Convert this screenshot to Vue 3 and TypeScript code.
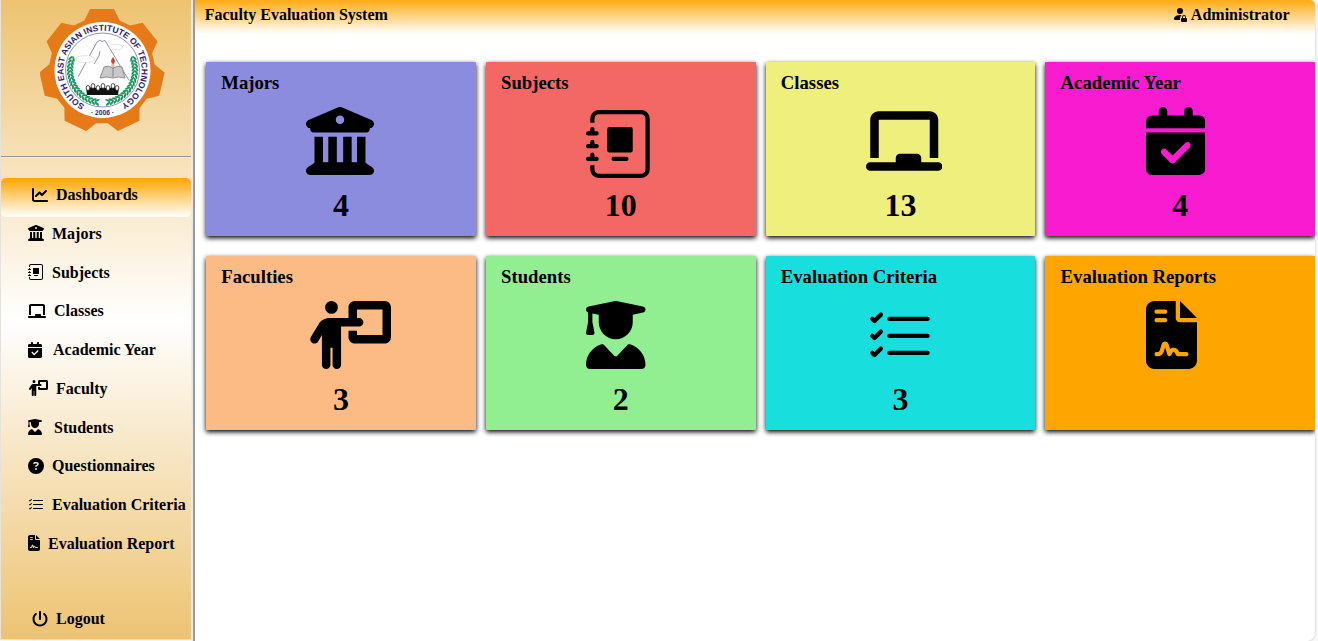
<script setup lang="ts">
interface Icon { w: number; h: number; d: string }
interface MenuItem { label: string; icon: string; gap: number; width: number; shift?: boolean; active?: boolean }
interface Card { title: string; icon: string; count: string; color: string }

const icons: Record<string, Icon> = {
  chart: { w: 512, h: 512, d: 'M64 64c0-17.7-14.3-32-32-32S0 46.3 0 64V400c0 44.2 35.8 80 80 80H480c17.7 0 32-14.3 32-32s-14.3-32-32-32H80c-8.8 0-16-7.2-16-16V64zm406.6 86.6c12.5-12.5 12.5-32.8 0-45.3s-32.8-12.5-45.3 0L320 210.7l-57.4-57.4c-12.5-12.5-32.8-12.5-45.3 0l-112 112c-12.5 12.5-12.5 32.8 0 45.3s32.8 12.5 45.3 0L240 221.3l57.4 57.4c12.5 12.5 32.8 12.5 45.3 0l128-128z' },
  columns: { w: 512, h: 512, d: 'M243.4 2.6l-224 96c-14 6-21.8 21-18.7 35.8S16.8 160 32 160v8c0 13.3 10.7 24 24 24H456c13.3 0 24-10.7 24-24v-8c15.2 0 28.3-10.7 31.3-25.6s-4.8-29.9-18.7-35.8l-224-96c-8-3.4-17.2-3.4-25.2 0zM128 224H64V420.3c-.6 .3-1.2 .7-1.8 1.1l-48 32c-11.7 7.8-17 22.4-12.9 35.9S17.9 512 32 512H480c14.1 0 26.5-9.2 30.6-22.7s-1.1-28.1-12.9-35.9l-48-32c-.6-.4-1.2-.7-1.8-1.1V224H384V416H344V224H280V416H232V224H168V416H128V224zM256 64a32 32 0 1 1 0 64 32 32 0 1 1 0-64z' },
  journal: { w: 16, h: 16, d: 'M5.5 4a.5.5 0 0 0-.5.5v5a.5.5 0 0 0 .5.5h5a.5.5 0 0 0 .5-.5v-5a.5.5 0 0 0-.5-.5h-5zm1 7a.5.5 0 0 0 0 1h3a.5.5 0 0 0 0-1h-3zM3 0h10a2 2 0 0 1 2 2v12a2 2 0 0 1-2 2H3a2 2 0 0 1-2-2v-1h1v1a1 1 0 0 0 1 1h10a1 1 0 0 0 1-1V2a1 1 0 0 0-1-1H3a1 1 0 0 0-1 1v1H1V2a2 2 0 0 1 2-2zM1 5v-.5a.5.5 0 0 1 1 0V5h.5a.5.5 0 0 1 0 1h-2a.5.5 0 0 1 0-1H1zm0 3v-.5a.5.5 0 0 1 1 0V8h.5a.5.5 0 0 1 0 1h-2a.5.5 0 0 1 0-1H1zm0 3v-.5a.5.5 0 0 1 1 0v.5h.5a.5.5 0 0 1 0 1h-2a.5.5 0 0 1 0-1H1z' },
  board: { w: 576, h: 512, d: 'M96 32C60.7 32 32 60.7 32 96V384H96V96l384 0V384h64V96c0-35.3-28.7-64-64-64H96zM224 384v32H32c-17.7 0-32 14.3-32 32s14.3 32 32 32H544c17.7 0 32-14.3 32-32s-14.3-32-32-32H416V384c0-17.7-14.3-32-32-32H256c-17.7 0-32 14.3-32 32z' },
  calendar: { w: 448, h: 512, d: 'M128 0c17.7 0 32 14.3 32 32V64H288V32c0-17.7 14.3-32 32-32s32 14.3 32 32V64h48c26.5 0 48 21.5 48 48v48H0V112C0 85.5 21.5 64 48 64H96V32c0-17.7 14.3-32 32-32zM0 192H448V464c0 26.5-21.5 48-48 48H48c-26.5 0-48-21.5-48-48V192zM329 305c9.4-9.4 9.4-24.6 0-33.9s-24.6-9.4-33.9 0l-95 95-47-47c-9.4-9.4-24.6-9.4-33.9 0s-9.4 24.6 0 33.9l64 64c9.4 9.4 24.6 9.4 33.9 0L329 305z' },
  teacher: { w: 640, h: 512, d: 'M192 96a48 48 0 1 0 0-96 48 48 0 1 0 0 96zm-8 384V352h16V480c0 17.7 14.3 32 32 32s32-14.3 32-32V192h56 64 16c17.7 0 32-14.3 32-32s-14.3-32-32-32H384V64H576V256H384V224H320v48c0 26.5 21.5 48 48 48H592c26.5 0 48-21.5 48-48V48c0-26.5-21.5-48-48-48H368c-26.5 0-48 21.5-48 48v80H243.1 177.1c-33.7 0-64.9 17.7-82.3 46.6l-58.3 97c-9.1 15.1-4.2 34.8 10.9 43.9s34.8 4.2 43.9-10.9L120 256.9V480c0 17.7 14.3 32 32 32s32-14.3 32-32z' },
  graduate: { w: 448, h: 512, d: 'M219.3 .5c3.1-.6 6.3-.6 9.4 0l200 40C439.9 42.7 448 52.6 448 64s-8.1 21.3-19.3 23.5L352 102.9V160c0 70.7-57.3 128-128 128s-128-57.3-128-128V102.9L48 93.3v65.1l15.7 78.4c.9 4.7-.3 9.6-3.3 13.3s-7.6 5.9-12.4 5.9H16c-4.8 0-9.3-2.1-12.4-5.9s-4.3-8.6-3.3-13.3L16 158.4V86.6C6.5 83.3 0 74.3 0 64C0 52.6 8.1 42.7 19.3 40.5l200-40zM111.9 327.7c10.5-3.4 21.8 .4 29.4 8.5l71 75.5c6.3 6.7 17 6.7 23.3 0l71-75.5c7.6-8.1 18.9-11.9 29.4-8.5C401 348.6 448 409.4 448 481.3c0 17-13.8 30.7-30.7 30.7H30.7C13.8 512 0 498.2 0 481.3c0-71.9 47-132.7 111.9-153.6z' },
  question: { w: 512, h: 512, d: 'M256 512A256 256 0 1 0 256 0a256 256 0 1 0 0 512zM169.8 165.3c7.9-22.3 29.1-37.3 52.8-37.3h58.3c34.9 0 63.1 28.3 63.1 63.1c0 22.6-12.1 43.5-31.7 54.8L280 264.4c-.2 13-10.9 23.6-24 23.6c-13.3 0-24-10.7-24-24V250.5c0-8.6 4.6-16.5 12.1-20.8l44.3-25.4c4.7-2.7 7.6-7.7 7.6-13.1c0-8.4-6.8-15.1-15.1-15.1H222.6c-3.4 0-6.4 2.1-7.5 5.3l-.4 1.2c-4.4 12.5-18.2 19-30.6 14.6s-19-18.2-14.6-30.6l.4-1.2zM224 352a32 32 0 1 1 64 0 32 32 0 1 1-64 0z' },
  checklist: { w: 16, h: 16, d: 'M5 11.5a.5.5 0 0 1 .5-.5h9a.5.5 0 0 1 0 1h-9a.5.5 0 0 1-.5-.5zm0-4a.5.5 0 0 1 .5-.5h9a.5.5 0 0 1 0 1h-9a.5.5 0 0 1-.5-.5zm0-4a.5.5 0 0 1 .5-.5h9a.5.5 0 0 1 0 1h-9a.5.5 0 0 1-.5-.5zM3.854 2.146a.5.5 0 0 1 0 .708l-1.5 1.5a.5.5 0 0 1-.708 0l-.5-.5a.5.5 0 1 1 .708-.708L2 3.293l1.146-1.147a.5.5 0 0 1 .708 0zm0 4a.5.5 0 0 1 0 .708l-1.5 1.5a.5.5 0 0 1-.708 0l-.5-.5a.5.5 0 1 1 .708-.708L2 7.293l1.146-1.147a.5.5 0 0 1 .708 0zm0 4a.5.5 0 0 1 0 .708l-1.5 1.5a.5.5 0 0 1-.708 0l-.5-.5a.5.5 0 0 1 .708-.708l.146.147 1.146-1.147a.5.5 0 0 1 .708 0z' },
  contract: { w: 384, h: 512, d: 'M64 0C28.7 0 0 28.7 0 64V448c0 35.3 28.7 64 64 64H320c35.3 0 64-28.7 64-64V160H256c-17.7 0-32-14.3-32-32V0H64zM256 0V128H384L256 0zM80 64h64c8.8 0 16 7.2 16 16s-7.2 16-16 16H80c-8.8 0-16-7.2-16-16s7.2-16 16-16zm0 64h64c8.8 0 16 7.2 16 16s-7.2 16-16 16H80c-8.8 0-16-7.2-16-16s7.2-16 16-16zm54.2 253.8c-6.1 20.3-24.8 34.2-46 34.2H80c-8.8 0-16-7.2-16-16s7.2-16 16-16h8.2c7.1 0 13.3-4.6 15.3-11.4l14.9-49.5c3.4-11.3 13.8-19.1 25.6-19.1s22.2 7.7 25.6 19.1l11.6 38.6c7.4-6.2 16.8-9.7 26.8-9.7c15.9 0 30.4 9 37.5 23.2l4.4 8.8H304c8.8 0 16 7.2 16 16s-7.2 16-16 16H240c-6.1 0-11.6-3.4-14.3-8.8l-8.8-17.7c-1.7-3.4-5.1-5.5-8.8-5.5s-7.2 2.1-8.8 5.5l-8.8 17.7c-2.9 5.9-9.2 9.4-15.7 8.8s-12.1-5.1-13.9-11.3L144 349l-9.8 32.8z' },
  power: { w: 512, h: 512, d: 'M288 32c0-17.7-14.3-32-32-32s-32 14.3-32 32V256c0 17.7 14.3 32 32 32s32-14.3 32-32V32zM143.5 120.6c13.6-11.3 15.4-31.5 4.1-45.1s-31.5-15.4-45.1-4.1C49.7 115.4 16 181.8 16 256c0 132.5 107.5 240 240 240s240-107.5 240-240c0-74.2-33.8-140.6-86.6-184.6c-13.6-11.3-33.8-9.4-45.1 4.1s-9.4 33.8 4.1 45.1c38.9 32.3 63.5 81 63.5 135.4c0 97.2-78.8 176-176 176s-176-78.8-176-176c0-54.4 24.7-103.1 63.5-135.4z' },
  userLock: { w: 16, h: 16, d: 'M11 5a3 3 0 1 1-6 0 3 3 0 0 1 6 0m-9 8c0 1 1 1 1 1h5v-1a2 2 0 0 1 .01-.2 4.49 4.49 0 0 1 1.534-3.693Q8.844 9.002 8 9c-5 0-6 3-6 4m7 0a1 1 0 0 1 1-1v-1a2 2 0 1 1 4 0v1a1 1 0 0 1 1 1v2a1 1 0 0 1-1 1h-4a1 1 0 0 1-1-1zm3-3a1 1 0 0 0-1 1v1h2v-1a1 1 0 0 0-1-1' },
}

const viewBox = (name: string) => `0 0 ${icons[name].w} ${icons[name].h}`

const menu: MenuItem[] = [
  { label: 'Dashboards', icon: 'chart', width: 16, gap: 8, shift: true, active: true },
  { label: 'Majors', icon: 'columns', width: 16, gap: 8 },
  { label: 'Subjects', icon: 'journal', width: 16, gap: 8 },
  { label: 'Classes', icon: 'board', width: 18, gap: 8 },
  { label: 'Academic Year', icon: 'calendar', width: 14, gap: 11 },
  { label: 'Faculty', icon: 'teacher', width: 20, gap: 8 },
  { label: 'Students', icon: 'graduate', width: 14, gap: 12 },
  { label: 'Questionnaires', icon: 'question', width: 16, gap: 8 },
  { label: 'Evaluation Criteria', icon: 'checklist', width: 16, gap: 8 },
  { label: 'Evaluation Report', icon: 'contract', width: 12, gap: 8 },
]

const cards: Card[] = [
  { title: 'Majors', icon: 'columns', count: '4', color: '#8c8cdf' },
  { title: 'Subjects', icon: 'journal', count: '10', color: '#f36865' },
  { title: 'Classes', icon: 'board', count: '13', color: '#eeef7c' },
  { title: 'Academic Year', icon: 'calendar', count: '4', color: '#f81bd0' },
  { title: 'Faculties', icon: 'teacher', count: '3', color: '#fcbb84' },
  { title: 'Students', icon: 'graduate', count: '2', color: '#91ee91' },
  { title: 'Evaluation Criteria', icon: 'checklist', count: '3', color: '#19dede' },
  { title: 'Evaluation Reports', icon: 'contract', count: '', color: '#ffa500' },
]

// Seven-toothed gear outline around the emblem
const polar = (r: number, deg: number) => {
  const a = (deg * Math.PI) / 180
  return `${(62 + r * Math.cos(a)).toFixed(2)},${(62.5 + r * Math.sin(a)).toFixed(2)}`
}
const gear = Array.from({ length: 7 }, (_, i) => {
  const a = -90 + (i * 360) / 7
  return [polar(62.6, a - 11), polar(62.6, a + 11), polar(53, a + 19.5), polar(53, a + 32)].join(' ')
}).join(' ')

// Laurel leaves, mirrored on both sides of the seal
const leaves = Array.from({ length: 17 }, (_, i) => {
  const deg = 98 + i * 6.3
  const a = (deg * Math.PI) / 180
  return { x: 62.5 + 32.5 * Math.cos(a), y: 62 + 32.5 * Math.sin(a), rot: deg + 90 }
})
const heads = [48, 53, 58, 63, 68, 73, 77]
</script>

<template>
  <div class="page">
    <aside class="sidebar">
      <svg class="logo" viewBox="0 0 125 125">
        <polygon :points="gear" fill="#e67a18" />
        <circle cx="62.5" cy="62" r="48" fill="#fff" />
        <circle cx="62.5" cy="62" r="37" fill="#fff" stroke="#4b4680" stroke-width=".6" />
        <path id="ring" d="M44.7 96.9A39.2 39.2 0 1 1 80.3 96.9" fill="none" />
        <text class="seal"><textPath href="#ring" textLength="208" lengthAdjust="spacingAndGlyphs">SOUTH EAST ASIAN INSTITUTE OF TECHNOLOGY</textPath></text>
        <text x="62.5" y="107" class="year" textLength="23" lengthAdjust="spacingAndGlyphs">· 2006 ·</text>
        <path d="M38 69L57 34l3-2 2 1.500 3-1 3 5 21 35M60 43l-1 5-5 8" fill="none" stroke="#61608d" stroke-width=".7" />
        <ellipse cx="45" cy="51" rx="9.500" ry="3.500" fill="#fff" stroke="#ccc" stroke-width=".5" />
        <ellipse cx="76" cy="39" rx="7" ry="2.800" fill="#fff" stroke="#ccc" stroke-width=".5" />
        <path d="M60 70l4-11q5-2 9 1 5-3 9-1l3 11q-7-2-12 0-6-2-13 0zM73 60v9" fill="#c9c9c9" stroke="#777" stroke-width=".8" />
        <path d="M73 59v-4" stroke="#e8b9a0" stroke-width="3" />
        <path d="M73 49q-4 5 0 7 4-2 0-7z" fill="#e23c2e" />
        <g v-for="side in [1, -1]" :key="side" :transform="side === 1 ? '' : 'translate(125 0) scale(-1 1)'" fill="#13965a">
          <g v-for="(l, i) in leaves" :key="i" :transform="`translate(${l.x} ${l.y}) rotate(${l.rot})`">
            <ellipse cx="0" cy="-1.900" rx="2.800" ry="1" transform="rotate(32)" />
            <ellipse cx="0" cy="1.900" rx="2.800" ry="1" transform="rotate(-32)" />
          </g>
        </g>
        <path d="M46 79q16 2 33 0l-1 8H47z" fill="#111" />
        <g v-for="(x, i) in heads" :key="x">
          <ellipse :cx="x" :cy="i % 2 ? 78 : 80" rx="1.900" ry="2.400" fill="#fff" stroke="#222" stroke-width=".8" />
        </g>
      </svg>
      <div class="rule"></div>
      <nav class="menu">
        <a v-for="m in menu" :key="m.label" class="item" :class="{ active: m.active, shift: m.shift }">
          <svg :viewBox="viewBox(m.icon)" :style="{ width: m.width + 'px', marginRight: m.gap + 'px' }"><path :d="icons[m.icon].d" fill-rule="evenodd" /></svg>
          <span>{{ m.label }}</span>
        </a>
      </nav>
      <a class="item shift logout">
        <svg class="power" :viewBox="viewBox('power')"><path :d="icons.power.d" /></svg>
        <span>Logout</span>
      </a>
    </aside>
    <main class="main">
      <header class="topbar">
        <span>Faculty Evaluation System</span>
        <span class="user">
          <svg viewBox="0 0 16 16"><path :d="icons.userLock.d" /></svg>
          <span>Administrator</span>
        </span>
      </header>
      <section class="grid">
        <article v-for="c in cards" :key="c.title" class="card" :style="{ backgroundColor: c.color }">
          <h3>{{ c.title }}</h3>
          <svg :viewBox="viewBox(c.icon)" :class="{ low: icons[c.icon].h === 16 }"><path :d="icons[c.icon].d" :fill-rule="icons[c.icon].h === 16 ? 'nonzero' : 'evenodd'" /></svg>
          <strong>{{ c.count }}</strong>
        </article>
      </section>
    </main>
  </div>
</template>

<style>
body { margin: 0; overflow: hidden; background: #f7f7f7; }
</style>

<style scoped>
.page {
  display: flex;
  width: 1318px;
  height: 641px;
  overflow: hidden;
  color: #000;
  font: bold 16px/18px "Liberation Serif", "Times New Roman", serif;
}
.sidebar {
  box-sizing: border-box;
  flex: none;
  width: 192px;
  height: 640px;
  border: 1px solid #e6e3dc;
  border-top: 0;
  border-right-color: #f1eee8;
  background: linear-gradient(#edc371, #fff 50%, #edc371);
}
.sidebar::before { content: ""; display: table; }
.logo { display: block; width: 125px; height: 125px; margin: 8px 0 0 39px; }
.seal { font: bold 8.500px "Liberation Sans", Arial, sans-serif; fill: #2d2174; }
.year { font: bold 7.500px "Liberation Sans", Arial, sans-serif; fill: #2d2174; text-anchor: middle; }
.rule { height: 1px; margin-top: 23px; background: #969696; border-bottom: 1px solid #f0ece3; }
.menu { margin-top: 20px; }
.item {
  box-sizing: border-box;
  display: flex;
  align-items: flex-start;
  height: 38.75px;
  padding: 8px 0 0 27px;
  white-space: nowrap;
}
.item svg { flex: none; height: 16px; margin-top: .5px; }
.item.shift { padding-left: 31px; }
.item.active {
  border-radius: 5px;
  background: linear-gradient(orange, #fff);
}
.logout { margin-top: 36.500px; }
.item .power { width: 16px; margin-right: 8px; }
.main {
  flex: none;
  box-sizing: border-box;
  width: 1122px;
  height: 641px;
  margin-left: 1px;
  overflow: hidden;
  border-left: 2px solid #9b9b9b;
  border-radius: 0 5px 8px 0;
  background: #fff;
  box-shadow: 0 0 2px #bbb;
}
.topbar {
  box-sizing: border-box;
  display: flex;
  justify-content: space-between;
  height: 34px;
  padding: 6px 25.500px 0 9.700px;
  background: linear-gradient(#ffab14, #fff);
}
.user { display: flex; gap: 3px; }
.user svg { width: 16px; height: 16px; }
.grid {
  display: grid;
  grid-template-columns: repeat(4, 269.900px);
  grid-auto-rows: 174px;
  gap: 20px 9.900px;
  margin: 28px 0 0 10.950px;
}
.card {
  display: flex;
  flex-direction: column;
  align-items: flex-start;
  border-radius: 1px;
  box-shadow: 0 2px 5px #000;
}
.card h3 { margin: 10px 0 0 15.300px; font-size: 18.720px; line-height: 21px; }
.card svg { height: 68px; margin: 13.600px 0 0 100.300px; }
.card svg.low { margin-top: 17px; margin-bottom: -3.400px; }
.card strong { align-self: center; margin-top: 12.300px; font-size: 32px; line-height: 36px; }
</style>
